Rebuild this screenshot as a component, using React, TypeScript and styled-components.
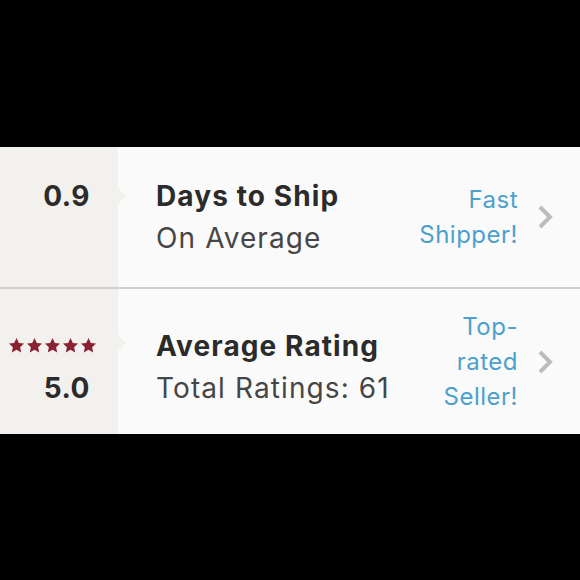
import React from 'react';
import styled, { createGlobalStyle } from 'styled-components';

const GlobalStyle = createGlobalStyle`
  body {
    margin: 0;
    background: #000;
    font-family: Inter, 'Open Sans', sans-serif;
  }
`;

const Page = styled.div`
  width: 580px;
  height: 580px;
  background: #000;
  padding-top: 147px;
  box-sizing: border-box;
`;

const List = styled.div`
  background: #fbfafa;
`;

const Row = styled.div<{ $height: number }>`
  display: flex;
  height: ${(p) => p.$height}px;
  & + & {
    border-top: 2px solid #d2d0ce;
  }
`;

const Side = styled.div<{ $shift?: number }>`
  position: relative;
  width: 118px;
  flex-shrink: 0;
  background: #f3f1ee;
  display: flex;
  flex-direction: column;
  justify-content: center;
  align-items: flex-end;
  padding-right: 28px;
  box-sizing: border-box;
  padding-top: ${(p) => (p.$shift || 0) * 2}px;
`;

const Notch = styled.span<{ $top: number }>`
  position: absolute;
  right: -8px;
  top: ${(p) => p.$top}px;
  width: 0;
  height: 0;
  border-top: 8px solid transparent;
  border-bottom: 8px solid transparent;
  border-left: 8px solid #f3f1ee;
`;

const Line = styled.div`
  height: 42px;
  line-height: 42px;
  font-size: 28px;
  white-space: nowrap;
`;

const Score = styled(Line)`
  font-weight: 700;
  color: #2b2b2b;
  letter-spacing: 0.5px;
`;

const Stars = styled(Line)`
  display: flex;
  align-items: center;
  gap: 3px;
  margin-right: -6px;
`;

const Main = styled.div<{ $shift?: number }>`
  flex: 1;
  display: flex;
  flex-direction: column;
  justify-content: center;
  padding-left: 38px;
  padding-top: ${(p) => (p.$shift || 0) * 2}px;
`;

const Title = styled(Line)`
  font-weight: 700;
  color: #2b2b2b;
  letter-spacing: 1.1px;
`;

const Subtitle = styled(Line)`
  color: #464646;
  font-weight: 400;
  letter-spacing: 1.1px;
`;

const Badge = styled.div`
  display: flex;
  align-items: center;
  padding-right: 27px;
  gap: 19px;
`;

const BadgeText = styled.div`
  color: #4ba1cd;
  font-size: 24px;
  line-height: 35px;
  letter-spacing: 0.5px;
  text-align: right;
`;

const Star = () => (
  <svg width="15" height="15" viewBox="0 0 24 24">
    <path
      d="M12 0l3.7 8 8.3.9-6.2 5.7 1.7 8.4L12 18.8 4.5 23l1.7-8.4L0 8.9 8.3 8z"
      fill="#8b2232"
    />
  </svg>
);

const Chevron = () => (
  <svg width="16" height="24" viewBox="0 0 16 24">
    <path d="M3 2l10 10-10 10" fill="none" stroke="#bdbcbb" strokeWidth="4" />
  </svg>
);

const App = () => {
  return (
    <Page>
      <GlobalStyle />
      <List>
        <Row $height={140}>
          <Side>
            <Notch $top={41} />
            <Score>0.9</Score>
            <Line />
          </Side>
          <Main>
            <Title>Days to Ship</Title>
            <Subtitle>On Average</Subtitle>
          </Main>
          <Badge>
            <BadgeText>
              Fast
              <br />
              Shipper!
            </BadgeText>
            <Chevron />
          </Badge>
        </Row>
        <Row $height={145}>
          <Side $shift={5}>
            <Notch $top={46} />
            <Stars>
              {[0, 1, 2, 3, 4].map((i) => (
                <Star key={i} />
              ))}
            </Stars>
            <Score>5.0</Score>
          </Side>
          <Main $shift={5}>
            <Title>Average Rating</Title>
            <Subtitle>Total Ratings: 61</Subtitle>
          </Main>
          <Badge>
            <BadgeText>
              Top-
              <br />
              rated
              <br />
              Seller!
            </BadgeText>
            <Chevron />
          </Badge>
        </Row>
      </List>
    </Page>
  );
};

export default App;
